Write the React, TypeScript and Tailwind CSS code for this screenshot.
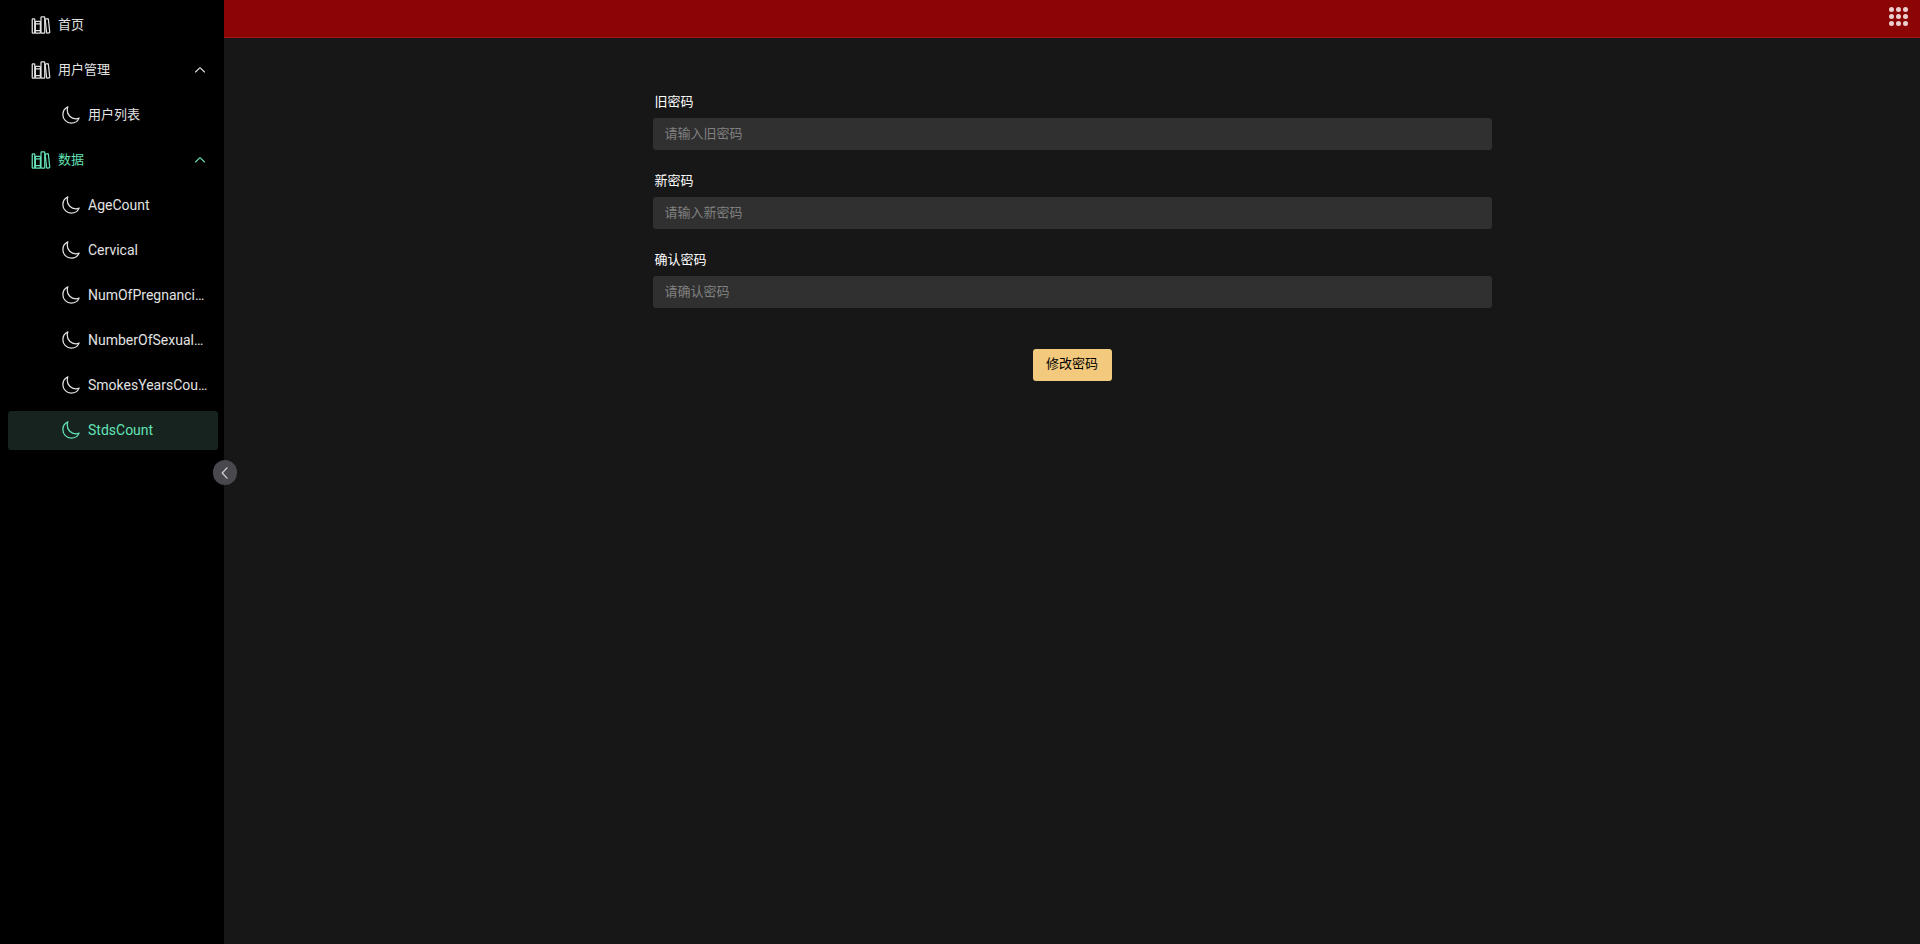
import { IoLibraryOutline, IoMoonOutline } from "react-icons/io5";

const font = { fontFamily: 'Roboto, "Noto Sans CJK SC", sans-serif' };

function Chevron() {
  return (
    <svg width="16" height="16" viewBox="0 0 16 16" fill="none" stroke="currentColor" strokeWidth="1.1" className="shrink-0">
      <path d="M3.5 10 L8 5.6 L12.5 10" strokeLinecap="round" strokeLinejoin="round" />
    </svg>
  );
}

function Root({ label, open, active }: { label: string; open?: boolean; active?: boolean }) {
  return (
    <div className={`mt-[6px] h-[39px] flex items-center pl-[23px] pr-[10px] pb-[2px] text-[13px] ${active ? "text-[#63e2b7]" : "text-[#e2e2e2]"}`}>
      <IoLibraryOutline size={20} className="shrink-0" />
      <span className="ml-[7px] flex-1">{label}</span>
      {open && <Chevron />}
    </div>
  );
}

function Sub({ label, active, cjk }: { label: string; active?: boolean; cjk?: boolean }) {
  return (
    <div className={`mt-[6px] h-[39px] flex items-center pl-[53px] pr-[8px] pb-[2px] rounded-[3px] ${cjk ? "text-[13px]" : "text-sm"} ${active ? "bg-[#16231e] text-[#63e2b7]" : "text-[#e2e2e2]"}`}>
      <IoMoonOutline size={20} className="shrink-0" />
      <span className="ml-[7px] flex-1 min-w-0 truncate">{label}</span>
    </div>
  );
}

function Field({ label, placeholder }: { label: string; placeholder: string }) {
  return (
    <div className="h-[79px] flex flex-col">
      <label className="h-[38px] pl-[2px] pt-[10.5px] text-[13px] leading-[22px] text-white">{label}</label>
      <input
        placeholder={placeholder}
        className="h-[32px] w-full shrink-0 rounded-[3px] bg-[#303030] px-[12px] pb-[2px] text-[13px] text-white outline-none placeholder:text-[#808080]"
      />
    </div>
  );
}

export default function App() {
  return (
    <div className="flex h-screen w-full overflow-hidden bg-[#171717]" style={font}>
      <aside className="relative w-[224px] shrink-0 bg-black">
        <nav className="pl-[8px] pr-[6px]">
          <Root label="首页" />
          <Root label="用户管理" open />
          <Sub label="用户列表" cjk />
          <Root label="数据" open active />
          <Sub label="AgeCount" />
          <Sub label="Cervical" />
          <Sub label="NumOfPregnanciesCount" />
          <Sub label="NumberOfSexualPartners" />
          <Sub label="SmokesYearsCount" />
          <Sub label="StdsCount" active />
        </nav>
        <button className="absolute left-[213px] top-[460px] flex h-[25px] w-[24px] items-center justify-center rounded-full bg-[#48484e] text-[#d6d6d6]">
          <svg width="16" height="16" viewBox="0 0 16 16" fill="none" stroke="currentColor" strokeWidth="1.2">
            <path d="M10 2.8 L5.2 8 L10 13.2" strokeLinecap="round" strokeLinejoin="round" />
          </svg>
        </button>
      </aside>
      <div className="flex min-w-0 flex-1 flex-col">
        <header className="flex h-[38px] shrink-0 items-start justify-end border-b border-[#a01a1a] bg-[#8b0505] pr-[12px] pt-[7px]">
          <div className="grid grid-cols-3 gap-[2px]">
            {Array.from({ length: 9 }).map((_, i) => (
              <span key={i} className="h-[5px] w-[5px] rounded-full bg-[#ecd0d0]" />
            ))}
          </div>
        </header>
        <main className="flex-1">
          <form className="mx-auto w-[839px] pt-[42px]">
            <Field label="旧密码" placeholder="请输入旧密码" />
            <Field label="新密码" placeholder="请输入新密码" />
            <Field label="确认密码" placeholder="请确认密码" />
            <div className="mt-[-6px] pt-[38px] flex justify-center">
              <button type="button" className="h-[32px] w-[79px] rounded-[3px] bg-[#f2c97d] pb-[2px] text-[13px] text-black">
                修改密码
              </button>
            </div>
          </form>
        </main>
      </div>
    </div>
  );
}
